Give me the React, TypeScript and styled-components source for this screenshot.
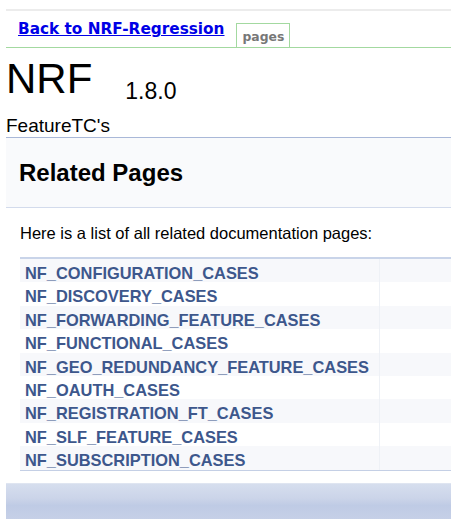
import React from 'react'
import styled, { createGlobalStyle } from 'styled-components'

const GlobalStyle = createGlobalStyle`
  html, body {
    margin: 0;
    padding: 0;
    background: #ffffff;
  }
  body {
    font-family: 'Liberation Sans', Arial, sans-serif;
    overflow: hidden;
  }
`

const Page = styled.div`
  padding-left: 6px;
  width: 445px;
  overflow: hidden;
`

const NavBar = styled.div`
  display: flex;
  align-items: flex-start;
  margin-top: 9px;
  height: 36px;
  padding-left: 12px;
  border-top: 2px solid #ececec;
  border-bottom: 1px solid #a3d9a0;
`

const BackLink = styled.a`
  margin-top: 9px;
  font-family: 'DejaVu Sans', Verdana, sans-serif;
  font-weight: bold;
  font-size: 15.3px;
  line-height: 18px;
  color: #0000e6;
  text-decoration: underline;
  white-space: nowrap;
`

const Tab = styled.div`
  margin-top: 12px;
  margin-left: 12px;
  height: 19px;
  padding: 5px 5px 0;
  border: 1px solid #a3d9a0;
  border-bottom: none;
  font-family: 'DejaVu Sans', Verdana, sans-serif;
  font-weight: bold;
  font-size: 12.4px;
  line-height: 15px;
  color: #777777;
`

const TitleRow = styled.div`
  display: flex;
  align-items: flex-start;
  margin-top: 10px;
  height: 46px;
`

const ProjectName = styled.div`
  font-size: 42px;
  line-height: 42px;
  color: #000000;
`

const ProjectNumber = styled.div`
  margin-top: 22px;
  margin-left: 33px;
  font-size: 23px;
  line-height: 23px;
  color: #000000;
`

const Brief = styled.div`
  margin-top: 10px;
  font-size: 19px;
  line-height: 23px;
  color: #000000;
`

const Header = styled.div`
  padding: 21px 0 20px 13px;
  background: #f9fafc;
  border-top: 1px solid #a9b8d8;
  border-bottom: 1px solid #d3dbec;
`

const HeaderTitle = styled.h1`
  margin: 0;
  font-size: 24px;
  line-height: 28px;
  font-weight: bold;
  color: #000000;
`

const Contents = styled.div`
  padding: 15px 0 0 14px;
`

const Intro = styled.p`
  margin: 0;
  font-size: 16.5px;
  line-height: 20px;
  color: #000000;
`

const Directory = styled.div`
  margin-top: 14px;
  border-top: 2px solid #c9d4e9;
  border-bottom: 1px solid #c4cfe5;
`

const Row = styled.div<{ $odd: boolean }>`
  display: grid;
  grid-template-columns: 360px 1fr;
  background: ${(p) => (p.$odd ? '#f7f8fb' : '#ffffff')};
`

const NameCell = styled.a`
  padding: 6px 0 1px 5px;
  font-size: 16.4px;
  line-height: 16.4px;
  font-weight: bold;
  color: #3d578c;
  text-decoration: none;
  border-right: 1px solid #eef1f6;
  white-space: nowrap;
`

const DescCell = styled.div``

const Footer = styled.div`
  margin-top: 12px;
  height: 36px;
  border-top: 1px solid #dfe5f1;
  background: linear-gradient(
    to bottom,
    #d6deee 0%,
    #cbd4e9 40%,
    #bfcbe5 60%,
    #c6d0e7 100%
  );
`

const pages = [
  'NF_CONFIGURATION_CASES',
  'NF_DISCOVERY_CASES',
  'NF_FORWARDING_FEATURE_CASES',
  'NF_FUNCTIONAL_CASES',
  'NF_GEO_REDUNDANCY_FEATURE_CASES',
  'NF_OAUTH_CASES',
  'NF_REGISTRATION_FT_CASES',
  'NF_SLF_FEATURE_CASES',
  'NF_SUBSCRIPTION_CASES',
]

const App: React.FC = () => {
  return (
    <Page>
      <GlobalStyle />
      <NavBar>
        <BackLink href="#">Back to NRF-Regression</BackLink>
        <Tab>pages</Tab>
      </NavBar>
      <TitleRow>
        <ProjectName>NRF</ProjectName>
        <ProjectNumber>1.8.0</ProjectNumber>
      </TitleRow>
      <Brief>FeatureTC's</Brief>
      <Header>
        <HeaderTitle>Related Pages</HeaderTitle>
      </Header>
      <Contents>
        <Intro>Here is a list of all related documentation pages:</Intro>
        <Directory>
          {pages.map((name, i) => (
            <Row key={name} $odd={i % 2 === 0}>
              <NameCell href="#">{name}</NameCell>
              <DescCell />
            </Row>
          ))}
        </Directory>
      </Contents>
      <Footer />
    </Page>
  )
}

export default App
